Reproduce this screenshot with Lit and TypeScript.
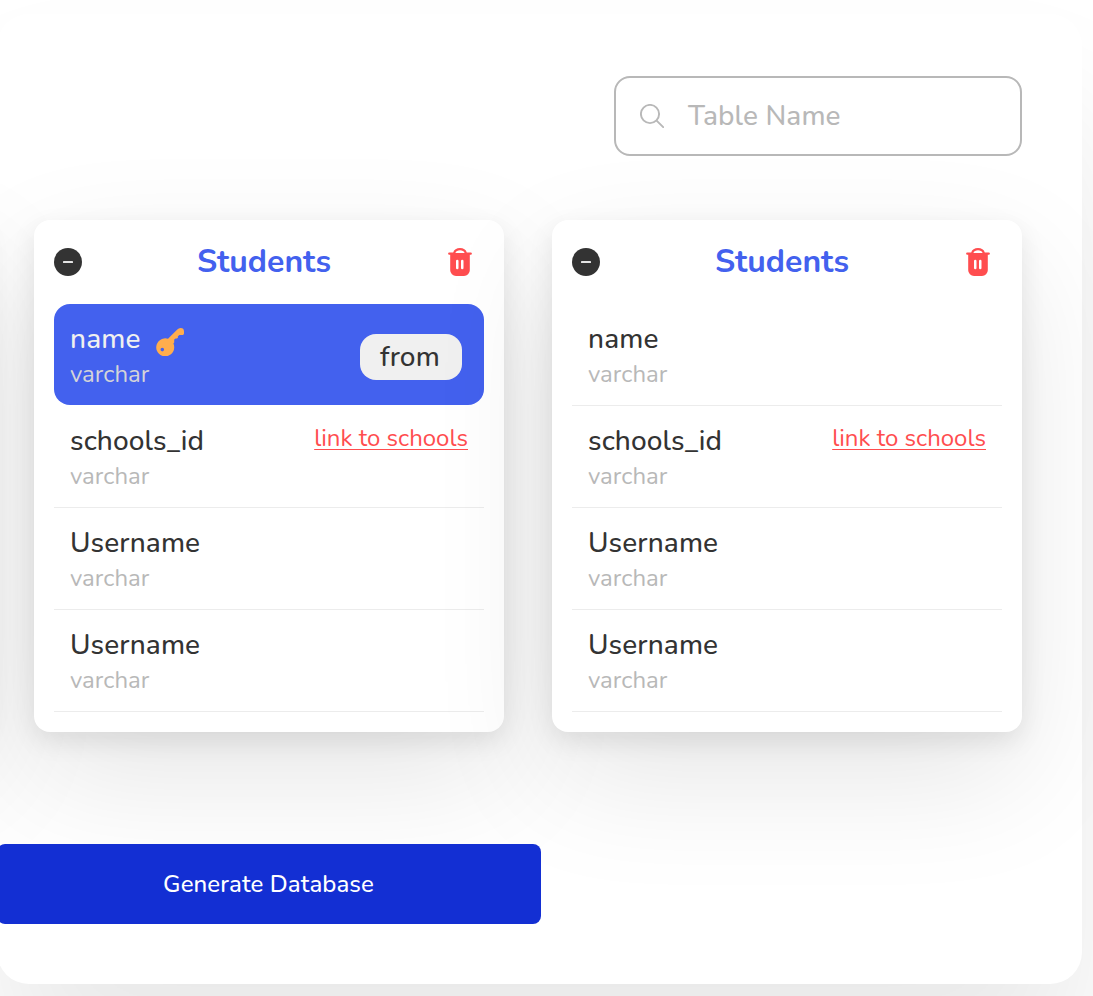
import { LitElement, html, css, svg } from "lit";
import { customElement, property } from "lit/decorators.js";

interface Column {
  name: string;
  type: string;
  selected?: boolean;
  link?: string;
}

const columns = (selected: boolean): Column[] => [
  { name: "name", type: "varchar", selected },
  { name: "schools_id", type: "varchar", link: "link to schools" },
  { name: "Username", type: "varchar" },
  { name: "Username", type: "varchar" },
];

const cardShadow = css`0 9px 26px rgba(0, 0, 0, 0.09), 0 46px 124px rgba(0, 0, 0, 0.1)`;

const minusIcon = html`<svg class="icon" width="28" height="28" viewBox="0 0 28 28">
  ${svg`<circle cx="14" cy="14" r="14" fill="#333"/><rect x="9" y="13" width="10" height="2" rx=".6" fill="#e4e4e4"/>`}
</svg>`;

const trashIcon = html`<svg class="icon" width="24" height="28" viewBox="0 0 24 28">
  ${svg`<path fill="#ff4d4f" fill-rule="evenodd" d="M5.2 4.4C5.9 1.6 8.6 0 12 0s6.1 1.6 6.8 4.4H22.7a1.2 1.2 0 0 1 0 2.4H21.8V22.2A5.8 5.8 0 0 1 16 28H8A5.8 5.8 0 0 1 2.2 22.2V6.8H1.3a1.2 1.2 0 0 1 0-2.4ZM7.4 4.9h9.2C16.1 3.2 14.3 2.3 12 2.3S7.9 3.2 7.4 4.9ZM8 13v7a1.25 1.25 0 0 0 2.5 0v-7a1.25 1.25 0 0 0-2.5 0Zm5 0v7a1.25 1.25 0 0 0 2.5 0v-7a1.25 1.25 0 0 0-2.5 0Z"/>`}
</svg>`;

const keyIcon = html`<svg class="icon key" width="28" height="28" viewBox="0 0 28 28">
  ${svg`<path fill="#ffad4d" fill-rule="evenodd" d="M12 10.8 21.3 1.5A4.4 4.4 0 0 1 24.6 0 3.4 3.4 0 0 1 28 3.4V5.2C28 6.3 27.3 7 26.3 7H23.4L21.9 8.2V9.3C21.9 10 21.5 10.4 20.8 10.4H19.6L18.2 11.6V14.4L17.4 15.6A9 9 0 1 1 12 10.8ZM6.3 19.8A1.8 1.8 0 1 0 6.3 23.4 1.8 1.8 0 0 0 6.3 19.8Z"/>`}
</svg>`;

@customElement("table-card")
class TableCard extends LitElement {
  @property() heading = "Students";
  @property({ attribute: false }) columns: Column[] = [];

  static styles = css`
    :host {
      display: block;
      box-sizing: border-box;
      flex: none;
      width: 470px;
      height: 512px;
      padding: 0 20px;
      border-radius: 16px;
      background: #fff;
      box-shadow: ${cardShadow};
    }
    .icon { display: block; flex: none; }
    .head {
      display: flex;
      align-items: center;
      justify-content: space-between;
      height: 84px;
      padding-right: 12px;
    }
    .title {
      margin: 0 2px 0 0;
      font-size: 32px;
      line-height: 40px;
      font-weight: 700;
      color: #4361ee;
    }
    .row {
      display: flex;
      justify-content: space-between;
      box-sizing: border-box;
      height: 102px;
      padding: 17px 16px 0;
      border-bottom: 1px solid #ececec;
    }
    .row.selected {
      height: 101px;
      margin-bottom: 1px;
      border: 0;
      border-radius: 16px;
      background: #4361ee;
    }
    .name {
      display: flex;
      gap: 15px;
      height: 37px;
      font-size: 28px;
      font-weight: 500;
      line-height: 36px;
      letter-spacing: 0.13px;
      color: #333;
    }
    .key { margin: 7px 0 0 0.6px; }
    .type {
      font-size: 24px;
      line-height: 32px;
      color: #b8b8b8;
    }
    .selected .name { color: #f0f0f0; }
    .selected .type { color: #d4d4d8; }
    .link {
      font-size: 24px;
      line-height: 30px;
      color: #ff4d4f;
      text-decoration: underline;
      text-decoration-thickness: 1.2px;
      text-underline-offset: 3px;
    }
    .badge {
      box-sizing: border-box;
      width: 102px;
      height: 46px;
      margin: 13px 6px 0 0;
      padding-right: 2px;
      border-radius: 16px;
      background: #f0f0f0;
      font-size: 28px;
      font-weight: 500;
      line-height: 46px;
      letter-spacing: 0.13px;
      text-align: center;
      color: #333;
    }
  `;

  render() {
    return html`
      <div class="head">${minusIcon}<h2 class="title">${this.heading}</h2>${trashIcon}</div>
      ${this.columns.map(
        (c) => html`<div class="row ${c.selected ? "selected" : ""}">
          <div>
            <div class="name"><span>${c.name}</span>${c.selected ? keyIcon : ""}</div>
            <div class="type">${c.type}</div>
          </div>
          ${c.selected ? html`<div class="badge">from</div>` : ""}
          ${c.link ? html`<a class="link">${c.link}</a>` : ""}
        </div>`
      )}
    `;
  }
}

@customElement("app-root")
class AppRoot extends LitElement {
  static styles = css`
    :host {
      display: block;
      box-sizing: border-box;
      width: 1093px;
      height: 996px;
      padding-top: 14px;
      overflow: hidden;
      background: #fff;
      font-family: Nunito, Lato, sans-serif;
    }
    .panel {
      box-sizing: border-box;
      display: flex;
      flex-direction: column;
      width: 1085px;
      height: 970px;
      margin-left: -3px;
      padding: 62px 60px 60px 0;
      border-radius: 32px;
      background: #fff;
      box-shadow: 0 100px 150px rgba(0, 0, 0, 0.09);
    }
    .search {
      align-self: flex-end;
      box-sizing: border-box;
      display: flex;
      align-items: center;
      flex: none;
      gap: 24px;
      width: 408px;
      height: 80px;
      padding-left: 24px;
      border: 2px solid #b8b8b8;
      border-radius: 16px;
      font-size: 28px;
      font-weight: 500;
      line-height: 36px;
      letter-spacing: 0.12px;
      color: #b8b8b8;
    }
    .cards {
      display: flex;
      flex: none;
      justify-content: flex-end;
      gap: 48px;
      margin-top: 64px;
    }
    .card-edge {
      flex: none;
      width: 470px;
      border-radius: 16px;
      background: #fff;
      box-shadow: ${cardShadow};
    }
    .generate {
      flex: none;
      width: 544px;
      height: 80px;
      margin-top: 112px;
      padding: 0 1px 0 0;
      border: 0;
      border-radius: 8px;
      background: #132fd3;
      color: #fff;
      font: 500 24px Nunito, Lato, sans-serif;
      letter-spacing: 0.1px;
      position: relative;
    }
  `;

  render() {
    return html`
      <main class="panel">
        <div class="search">
          <svg width="24" height="24" viewBox="0 0 24 24" fill="none" stroke="#b8b8b8" stroke-width="1.9" stroke-linecap="round">
            <circle cx="10" cy="10" r="9.1" /><path d="M16.6 16.6 23.2 23.2" />
          </svg>
          <span>Table Name</span>
        </div>
        <div class="cards">
          <div class="card-edge"></div>
          <table-card .columns=${columns(true)}></table-card>
          <table-card .columns=${columns(false)}></table-card>
        </div>
        <button class="generate">Generate Database</button>
      </main>
    `;
  }
}
